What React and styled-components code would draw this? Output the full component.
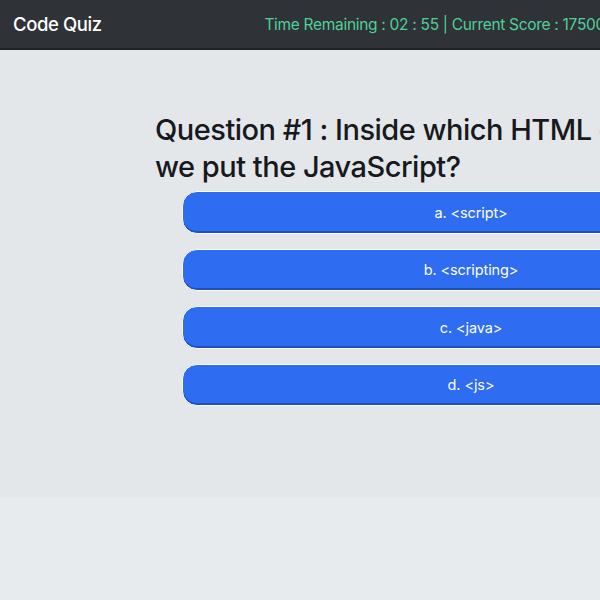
import styled, { createGlobalStyle } from "styled-components"

const Global = createGlobalStyle`
    html, body {
        margin: 0;
        padding: 0;
        background-color: #e8ebee;
        overflow: hidden;
    }
    body {
        font-family: Inter, "Noto Sans", sans-serif;
        width: 600px;
        height: 600px;
    }
`

const Pagina = styled.div`
    width: 600px;
    overflow: hidden;
`

const Cabecalho = styled.header`
    display: flex;
    align-items: center;
    justify-content: space-between;
    height: 48px;
    padding: 0 0 0 13px;
    background-color: #2f3236;
    border-bottom: 2px solid #1f2124;
    white-space: nowrap;
`

const Logo = styled.h1`
    margin: 0;
    color: white;
    font-size: 18.5px;
    font-weight: 500;
    letter-spacing: -0.4px;
`

const Placar = styled.span`
    color: #4fd09a;
    font-size: 15.5px;
    letter-spacing: -0.3px;
    margin-right: -5px;
`

const Principal = styled.main`
    background-color: #e4e7ea;
    height: 447px;
    padding-top: 61px;
    box-sizing: border-box;
`

const Conteudo = styled.div`
    margin-left: 155px;
    width: 600px;
`

const Pergunta = styled.h2`
    margin: 0 0 6px;
    color: #17191c;
    font-size: 29px;
    font-weight: 500;
    line-height: 37px;
    letter-spacing: -0.5px;
`

const Opcoes = styled.div`
    display: flex;
    flex-direction: column;
    gap: 15px;
    margin-left: 27px;
    width: 578px;
`

const Opcao = styled.button`
    height: 42.5px;
    border: 1px solid white;
    border-radius: 15px;
    background-color: #2e6cf2;
    box-shadow: inset 0 -2px 0 #2350b8;
    color: white;
    font-family: Inter, "Noto Sans", sans-serif;
    font-size: 14.5px;
    letter-spacing: -0.1px;
    cursor: pointer;
    padding: 0;
`

const opcoes = ["a. <script>", "b. <scripting>", "c. <java>", "d. <js>"]

const App = () => {
    return (
        <Pagina>
            <Global />
            <Cabecalho>
                <Logo>Code Quiz</Logo>
                <Placar>Time Remaining : 02 : 55 | Current Score : 17500</Placar>
            </Cabecalho>
            <Principal>
                <Conteudo>
                    <Pergunta>Question #1 : Inside which HTML element do we put the JavaScript?</Pergunta>
                    <Opcoes>
                        {opcoes.map(opcao => (
                            <Opcao key={opcao}>{opcao}</Opcao>
                        ))}
                    </Opcoes>
                </Conteudo>
            </Principal>
        </Pagina>
    )
}

export default App
